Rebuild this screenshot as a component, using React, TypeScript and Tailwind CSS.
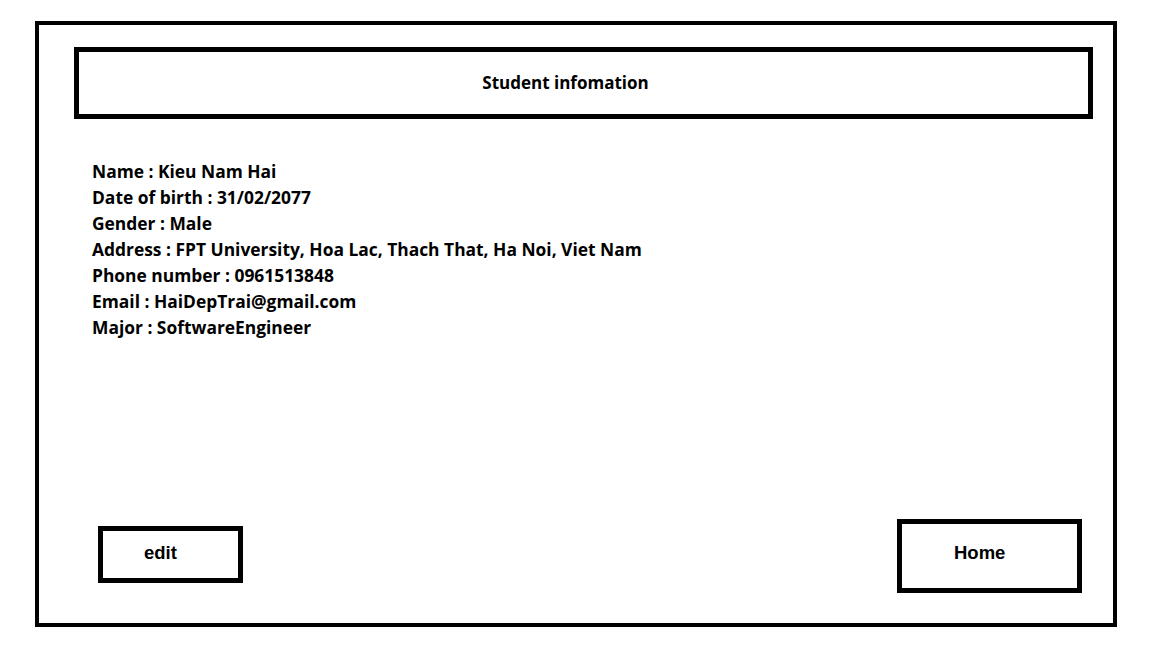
const info = [
  "Name : Kieu Nam Hai",
  "Date of birth : 31/02/2077",
  "Gender : Male",
  "Address : FPT University, Hoa Lac, Thach That, Ha Noi, Viet Nam",
  "Phone number : 0961513848",
  "Email : HaiDepTrai@gmail.com",
  "Major : SoftwareEngineer",
];

export default function App() {
  return (
    <div className="w-[1152px] h-[648px] bg-white pt-[21px] pl-[35px] overflow-hidden">
      <div className="w-[1082px] h-[606px] border-4 border-black flex flex-col">
        {/* header */}
        <div className="mt-[22px] ml-[35px] w-[1019px] h-[72px] border-[5px] border-black flex items-center justify-center">
          <h1 className="text-[17px] font-bold text-black font-['Open_Sans',sans-serif] pr-[36px] pb-[1px]">
            Student infomation
          </h1>
        </div>

        {/* details */}
        <div className="mt-[39px] ml-[53px] flex flex-col font-['Open_Sans',sans-serif] font-bold text-[17.4px] leading-[26px] text-black">
          {info.map((line) => (
            <p key={line}>{line}</p>
          ))}
        </div>

        {/* actions */}
        <div className="mt-auto mb-[30px] flex justify-between items-start">
          <button className="mt-[7px] ml-[59px] w-[145px] h-[57px] border-[5px] border-black flex items-start pt-[8px] pl-[41px] text-[18.5px] font-bold font-['Liberation_Sans',sans-serif] text-black">
            edit
          </button>
          <button className="mr-[31px] w-[185px] h-[74px] border-[5px] border-black flex items-start pt-[15px] pl-[52px] text-[18.5px] font-bold font-['Liberation_Sans',sans-serif] text-black">
            Home
          </button>
        </div>
      </div>
    </div>
  );
}
